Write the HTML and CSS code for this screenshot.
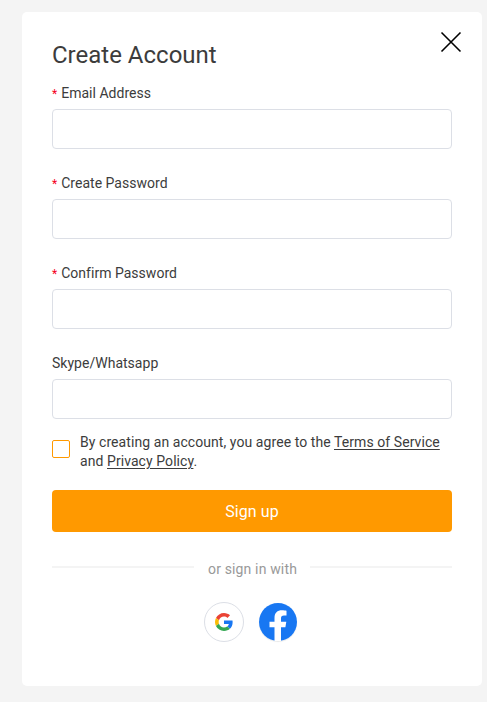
FILE: index.html
```
<!DOCTYPE html>
<html lang="en">
<head>
<meta charset="UTF-8">
<title>Create Account</title>
<link rel="stylesheet" href="styles.css">
</head>
<body>

<div class="modal">
  <button type="button" class="close" aria-label="Close">
    <svg width="22" height="22" viewBox="0 0 22 22"><path d="M1.5 1.5l19 19M20.5 1.5l-19 19" stroke="#000" stroke-width="1.6"/></svg>
  </button>

  <h1>Create Account</h1>

  <form>
    <div class="field">
      <label for="email"><span class="required">*</span>Email Address</label>
      <input type="email" id="email">
    </div>
    <div class="field">
      <label for="password"><span class="required">*</span>Create Password</label>
      <input type="password" id="password">
    </div>
    <div class="field">
      <label for="confirm"><span class="required">*</span>Confirm Password</label>
      <input type="password" id="confirm">
    </div>
    <div class="field">
      <label for="contact">Skype/Whatsapp</label>
      <input type="text" id="contact">
    </div>

    <div class="agree">
      <input type="checkbox" id="agree">
      <label for="agree">By creating an account, you agree to the <a href="#">Terms of Service</a> and <a href="#">Privacy Policy</a>.</label>
    </div>

    <button type="submit" class="submit">Sign up</button>
  </form>

  <div class="divider"><span>or sign in with</span></div>

  <div class="social">
    <a href="#" class="google" aria-label="Google">
      <svg width="18" height="18" viewBox="0 0 48 48">
        <path fill="#EA4335" d="M24 9.5c3.54 0 6.71 1.22 9.21 3.6l6.85-6.85C35.9 2.38 30.47 0 24 0 14.62 0 6.51 5.38 2.56 13.22l7.98 6.19C12.43 13.72 17.74 9.5 24 9.5z"/>
        <path fill="#1877f2" d="M46.98 24.55c0-1.57-.15-3.09-.38-4.55H24v9.02h12.94c-.58 2.96-2.26 5.48-4.78 7.18l7.73 6c4.51-4.18 7.09-10.36 7.09-17.65z"/>
        <path fill="#FBBC05" d="M10.53 28.59c-.48-1.45-.76-2.99-.76-4.59s.27-3.14.76-4.59l-7.98-6.19C.92 16.46 0 20.12 0 24c0 3.88.92 7.54 2.56 10.78l7.97-6.19z"/>
        <path fill="#34A853" d="M24 48c6.48 0 11.93-2.13 15.89-5.81l-7.73-6c-2.15 1.45-4.92 2.3-8.16 2.3-6.26 0-11.57-4.22-13.47-9.91l-7.98 6.19C6.51 42.62 14.62 48 24 48z"/>
      </svg>
    </a>
    <a href="#" class="facebook" aria-label="Facebook">
      <svg width="38" height="38" viewBox="0 0 38 38">
        <circle cx="19" cy="19" r="19" fill="#1877f2"/>
        <path fill="#fff" d="M15.500 38V24.200h-5v-5.500h5v-4c0-5 2.800-7.500 7.500-7.500 1.600 0 3.500.3 4.500.5v4.700H25c-2.300 0-3 1.300-3 2.800v3.500h5.300l-.9 5.500H22V38z"/>
      </svg>
    </a>
  </div>
</div>

</body>
</html>
```

FILE: styles.css
```
* {
  box-sizing: border-box;
}
body {
  margin: 0;
  padding: 12px 5px 16px 22px;
  background: #f4f4f4;
  font-family: Roboto, "Liberation Sans", sans-serif;
  font-size: 14px;
  color: #3c3c3c;
}
.modal {
  position: relative;
  width: 460px;
  height: 674px;
  padding: 28px 30px 0;
  background: #fff;
  border-radius: 5px;
}
.close {
  position: absolute;
  top: 19px;
  right: 20px;
  padding: 0;
  border: 0;
  background: none;
}
.close svg {
  display: block;
}
h1 {
  margin: 0 0 14px;
  font-size: 24px;
  font-weight: 400;
  line-height: 30px;
}
.field + .field {
  margin-top: 25px;
}
.field label {
  display: block;
  height: 25px;
  line-height: 18px;
  letter-spacing: 0.02px;
}
.required {
  margin-right: 4px;
  font-size: 12px;
  color: #f5001d;
}
.field input {
  display: block;
  width: 100%;
  height: 40px;
  padding: 0 12px;
  border: 1px solid #dcdfe6;
  border-radius: 4px;
}
.agree {
  display: flex;
  align-items: flex-start;
  padding: 14px 0 19px;
}
.agree input {
  flex: none;
  appearance: none;
  width: 18px;
  height: 18px;
  margin: 7px 10px 0 0;
  border: 1px solid #ff9900;
  border-radius: 2px;
}
.agree label {
  line-height: 19px;
  letter-spacing: 0.07px;
}
.agree a {
  color: inherit;
  text-underline-offset: 2px;
}
.submit {
  display: block;
  width: 100%;
  height: 42px;
  border: 0;
  border-radius: 4px;
  background: #ff9900;
  color: #fff;
  font-family: inherit;
  font-size: 16px;
  letter-spacing: 0.1px;
}
.divider {
  display: flex;
  align-items: center;
  gap: 14px;
  margin-top: 25px;
  height: 20px;
  color: #999;
  letter-spacing: 0.15px;
}
.divider span {
  padding-top: 4px;
}
.divider::before,
.divider::after {
  content: "";
  flex: 1;
  height: 2px;
  background: #f4f4f4;
}
.divider::after {
  margin-left: -1px;
}
.social {
  display: flex;
  justify-content: center;
  gap: 15px;
  margin-top: 25px;
  padding-right: 3px;
}
.google {
  display: flex;
  align-items: center;
  justify-content: center;
  width: 40px;
  height: 40px;
  border: 1px solid #dcdfe6;
  border-radius: 50%;
}
.facebook {
  width: 38px;
  height: 38px;
  margin-top: 1px;
  border-radius: 50%;
  box-shadow: 0 1px 1px #e8e8e8;
}
.facebook svg {
  display: block;
}
```
